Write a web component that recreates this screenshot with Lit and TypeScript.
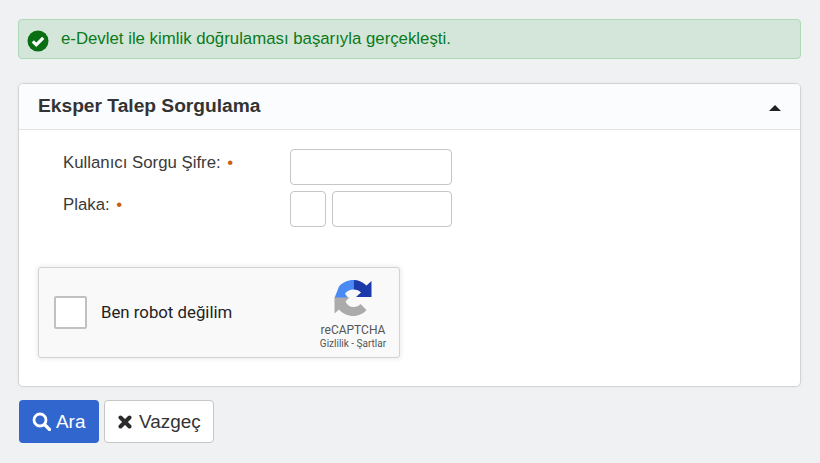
import { LitElement, html, css } from "lit";
import { customElement } from "lit/decorators.js";

@customElement("app-root")
export class AppRoot extends LitElement {
  static styles = css`
    :host { display: block; height: 463px; background: #f0f1f3; font-family: "Liberation Sans", Arial, sans-serif; color: #333; overflow: hidden; box-sizing: border-box; padding: 19px 19px 0 18px; }
    * { box-sizing: border-box; }
    .alert { height: 40px; background: #d4e6d9; border: 1px solid #add9b4; border-radius: 4px; display: flex; align-items: center; color: #0b7a20; font-size: 16.8px; padding: 0 0 0 8px; }
    .alert svg { width: 22px; height: 22px; margin: 3px 12px 0 0; flex: none; }
    .alert span { margin-top: -1px; }
    .panel { margin-top: 24px; height: 304px; background: #fff; border: 1px solid #d3d3d3; border-radius: 5px; box-shadow: 0 0 4px rgba(0,0,0,.04); overflow: hidden; }
    .head { height: 46px; background: #fbfcfe; border-bottom: 1px solid #e2e2e2; display: flex; align-items: center; justify-content: space-between; padding: 0 19px; }
    .head h2 { margin: -2px 0 0; font-size: 19.2px; font-weight: 700; color: #333; }
    .caret { width: 0; height: 0; border-left: 6px solid transparent; border-right: 6px solid transparent; border-bottom: 6px solid #222; margin-top: 2px; }
    .form { padding: 19px 0 0 44px; display: grid; grid-template-columns: 227px 162px; row-gap: 6px; }
    .label { font-size: 16.8px; color: #3a3a3a; height: 36px; padding-top: 4px; white-space: nowrap; }
    .label b { font-weight: 400; color: #c8600f; margin-left: 2px; }
    .input { height: 36px; background: #fff; border: 1px solid #c6c6c6; border-radius: 4px; }
    .plate { display: flex; gap: 6px; }
    .plate .a { width: 36px; flex: none; }
    .plate .b { flex: 1; }
    .captcha { margin: 40px 0 0 19px; width: 362px; height: 91px; background: #f9f9f9; border: 1px solid #d3d3d3; border-radius: 3px; box-shadow: 0 0 4px 1px rgba(0,0,0,.08); display: flex; align-items: center; font-family: Roboto, sans-serif; padding-left: 15px; }
    .box { width: 33px; height: 33px; background: #fff; border: 2px solid #c1c1c1; border-radius: 2px; flex: none; }
    .rob { font-size: 16.8px; color: #222; margin: -2px 0 0 14px; flex: 1; }
    .logo { width: 72px; margin-right: 10px; display: flex; flex-direction: column; align-items: center; color: #555; }
    .logo svg { width: 38px; height: 36px; margin-top: 5px; }
    .logo .t { font-size: 12px; margin-top: 7px; line-height: 14px; }
    .logo .s { font-size: 10px; margin-top: 1px; line-height: 12px; white-space: nowrap; }
    .btns { display: flex; gap: 5px; margin: 13px 0 0 1px; }
    .btn { height: 43px; border-radius: 4px; font-size: 18.9px; display: flex; align-items: center; }
    .btn svg { flex: none; }
    .ara { width: 80px; background: #3166cf; color: #fff; padding-left: 13px; }
    .ara svg { width: 19px; height: 19px; margin-right: 5px; }
    .vaz { width: 110px; background: #fff; border: 1px solid #c6c6c6; color: #333; padding-left: 13px; }
    .vaz svg { width: 14px; height: 14px; margin-right: 7px; }
  `;

  render() {
    return html`
      <div class="alert">
        <svg viewBox="0 0 22 22"><circle cx="11" cy="11" r="10.5" fill="#0a6e12"/><path d="M5.8 11.3 9.3 14.8 16.2 7.900" fill="none" stroke="#fff" stroke-width="3.2"/></svg>
        <span>e-Devlet ile kimlik doğrulaması başarıyla gerçekleşti.</span>
      </div>
      <div class="panel">
        <div class="head"><h2>Eksper Talep Sorgulama</h2><div class="caret"></div></div>
        <div class="form">
          <div class="label">Kullanıcı Sorgu Şifre: <b>•</b></div>
          <div class="input"></div>
          <div class="label">Plaka: <b>•</b></div>
          <div class="plate"><div class="input a"></div><div class="input b"></div></div>
        </div>
        <div class="captcha">
          <div class="box"></div>
          <div class="rob">Ben robot değilim</div>
          <div class="logo">
            <svg viewBox="0 0 37 36">
              <path d="M19 0C13 0 8 2.500 4.500 6.500L0 18H13.500L10.500 13.500C12 11.500 15.500 9.500 19 9.500Z" fill="#4a8af4"/>
              <path d="M19 0C24 0 28.500 2 32 5.500L37 1V17H21.500L26.500 12.500C25 10.500 22 9.500 19 9.500Z" fill="#1c3aa9"/>
              <path d="M0 17.500H15L11 21.500C12.500 25 15 27 19 27C22 27 24.500 26 26 24L32 30C29 33.500 24 36 19 36C13 36 8 33.500 4.500 29.500L0 33.500Z" fill="#ababab"/>
            </svg>
            <div class="t">reCAPTCHA</div>
            <div class="s">Gizlilik - Şartlar</div>
          </div>
        </div>
      </div>
      <div class="btns">
        <div class="btn ara">
          <svg viewBox="0 0 19 19"><circle cx="8" cy="8" r="6" fill="none" stroke="#fff" stroke-width="2.800"/><path d="M12.500 12.500 17.500 17.500" stroke="#fff" stroke-width="3.200" stroke-linecap="round"/></svg>Ara
        </div>
        <div class="btn vaz">
          <svg viewBox="0 0 14 14"><path d="M2.500 2.500 11.500 11.500M11.500 2.500 2.500 11.500" stroke="#2b2b2b" stroke-width="4" stroke-linecap="round"/></svg>Vazgeç
        </div>
      </div>
    `;
  }
}
